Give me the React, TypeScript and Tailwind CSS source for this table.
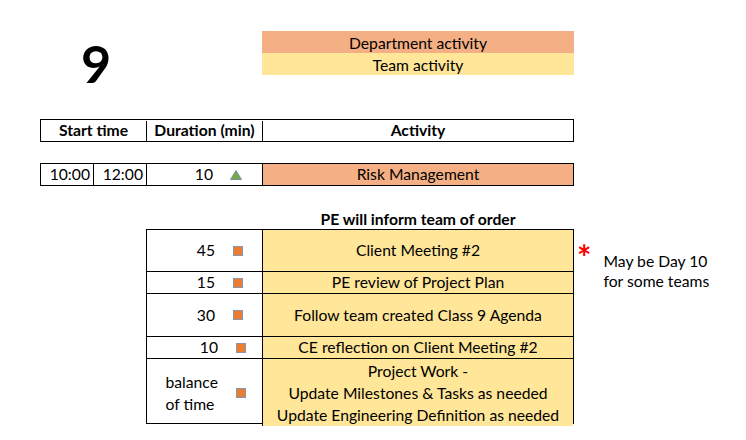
import React from "react";

const Sq = () => (
  <span className="inline-block w-[10px] h-[10px] bg-[#ED7D31] border border-[#8497B0]" />
);

const Tri = () => (
  <svg width="12" height="10" viewBox="0 0 12 10">
    <polygon points="6,0.5 11.5,9.5 0.5,9.5" fill="#70AD47" stroke="#7F8FA6" strokeWidth="1" />
  </svg>
);

type Row = { h: string; dur: React.ReactNode; pr: string; act: React.ReactNode };

export default function App() {
  const rows: Row[] = [
    { h: "h-[42px]", dur: "45", pr: "pr-[19px]", act: "Client Meeting #2" },
    { h: "h-[22px]", dur: "15", pr: "pr-[19px]", act: "PE review of Project Plan" },
    { h: "h-[43px]", dur: "30", pr: "pr-[19px]", act: "Follow team created Class 9 Agenda" },
    { h: "h-[22px]", dur: "10", pr: "pr-[16px]", act: "CE reflection on Client Meeting #2" },
    {
      h: "h-[65px]",
      dur: (
        <span className="text-center leading-[22px]">
          balance
          <br />
          of time
        </span>
      ),
      pr: "pr-[16px]",
      act: (
        <span className="text-center leading-[22px]">
          Project Work -
          <br />
          Update Milestones &amp; Tasks as needed
          <br />
          Update Engineering Definition as needed
        </span>
      ),
    },
  ];

  return (
    <div className="w-[746px] h-[440px] bg-white font-['Lato',sans-serif] text-[15.7px] text-black overflow-hidden">
      <div className="pt-[31px] pl-[40px]">
        {/* top */}
        <div className="flex h-[88px]">
          <div className="w-[222px] pl-[41px] pt-[6px]">
            <span className="font-bold text-[52px] leading-[52px]">9</span>
          </div>
          <div className="w-[312px]">
            <div className="h-[22px] bg-[#F4B084] flex items-center justify-center leading-none pt-[3px]">
              Department activity
            </div>
            <div className="h-[22px] bg-[#FFE699] flex items-center justify-center leading-none pt-[3px]">
              Team activity
            </div>
          </div>
        </div>

        {/* header */}
        <div className="grid grid-cols-[106px_116px_310px] w-[534px] h-[23px] border border-black font-bold leading-none pt-[1px]">
          <div className="border-r border-black flex items-center justify-center">Start time</div>
          <div className="border-r border-black flex items-center justify-center">Duration (min)</div>
          <div className="flex items-center justify-center">Activity</div>
        </div>

        {/* risk row */}
        <div className="mt-[21px] grid grid-cols-[53px_53px_116px_310px] w-[534px] h-[23px] border border-black leading-none">
          <div className="border-r border-black flex items-center justify-end pr-[3px] pt-[1px]">10:00</div>
          <div className="border-r border-black flex items-center justify-end pr-[3px] pt-[1px]">12:00</div>
          <div className="border-r border-black flex items-center justify-end pr-[20px] gap-[17px] pt-[1px]">
            <span>10</span>
            <Tri />
          </div>
          <div className="bg-[#F4B084] flex items-center justify-center pt-[1px]">Risk Management</div>
        </div>

        {/* PE text */}
        <div className="ml-[222px] w-[312px] h-[43px] flex items-end justify-center font-bold leading-[20px]">
          PE will inform team of order
        </div>

        {/* table + note */}
        <div className="flex items-start ml-[106px]">
          <div className="w-[428px] border-t border-l border-r border-black">
            {rows.map((r, i) => (
              <div key={i} className={`grid grid-cols-[116px_310px] border-b border-black ${r.h}`}>
                <div className={`border-r border-black flex items-center justify-end gap-[18px] ${r.pr}`}>
                  <span className="leading-none pt-[1px]">{r.dur}</span>
                  <Sq />
                </div>
                <div className="bg-[#FFE699] flex items-center justify-center leading-none pt-[1px]">{r.act}</div>
              </div>
            ))}
          </div>
          <div className="flex items-start ml-[3px] pt-[11px]">
            <span className="text-[#FF0000] font-bold text-[34px] leading-[34px]">*</span>
            <div className="ml-[12px] mt-[11px] leading-[20px]">
              May be Day 10
              <br />
              for some teams
            </div>
          </div>
        </div>
      </div>
    </div>
  );
}
